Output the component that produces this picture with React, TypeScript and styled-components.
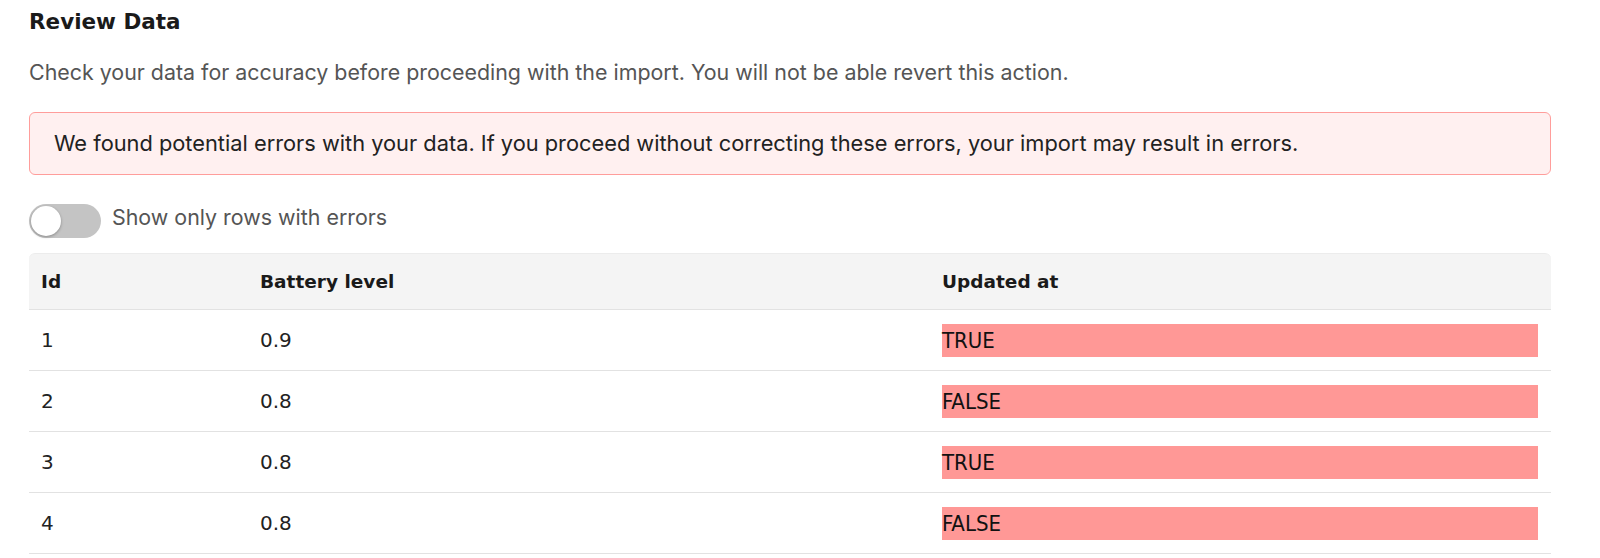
import React, { useState } from 'react';
import styled, { createGlobalStyle } from 'styled-components';

const GlobalStyle = createGlobalStyle`
  html, body {
    margin: 0;
    padding: 0;
    background: #fff;
  }
  body {
    font-family: Inter, "Noto Sans", sans-serif;
    color: #222;
  }
`;

interface Row {
  id: number;
  batteryLevel: string;
  updatedAt: string;
  error: boolean;
}

const rows: Row[] = [
  { id: 1, batteryLevel: '0.9', updatedAt: 'TRUE', error: true },
  { id: 2, batteryLevel: '0.8', updatedAt: 'FALSE', error: true },
  { id: 3, batteryLevel: '0.8', updatedAt: 'TRUE', error: true },
  { id: 4, batteryLevel: '0.8', updatedAt: 'FALSE', error: true },
];

const Page = styled.div`
  padding: 10px 49px 0 29px;
  display: flex;
  flex-direction: column;
`;

const Title = styled.h2`
  margin: 0;
  font-family: "DejaVu Sans", Lato, sans-serif;
  font-size: 21.5px;
  font-weight: 700;
  line-height: 24px;
  color: #1a1a1a;
`;

const Subtitle = styled.p`
  margin: 24px 0 0;
  font-size: 21.4px;
  line-height: 28px;
  color: #555;
`;

const Alert = styled.div`
  margin-top: 26px;
  padding: 16px 24px;
  border: 1px solid #ff9d9b;
  border-radius: 6px;
  background: #fff0f0;
  font-size: 21.8px;
  line-height: 29px;
  color: #222;
`;

const ToggleRow = styled.label`
  margin-top: 29px;
  display: flex;
  align-items: flex-start;
  gap: 11px;
  cursor: pointer;
`;

const ToggleText = styled.span`
  font-size: 21.4px;
  line-height: 26px;
  color: #555;
`;

const Track = styled.span<{ $on: boolean }>`
  position: relative;
  width: 72px;
  height: 34px;
  border-radius: 17px;
  background: ${(p) => (p.$on ? '#4c7df0' : '#c4c4c4')};
  flex-shrink: 0;
`;

const Knob = styled.span<{ $on: boolean }>`
  position: absolute;
  top: 2px;
  left: ${(p) => (p.$on ? '40px' : '2px')};
  width: 30px;
  height: 30px;
  border-radius: 50%;
  background: #fff;
  box-shadow: 0 1px 3px rgba(0, 0, 0, 0.3);
`;

const Table = styled.table`
  margin-top: 15px;
  width: 100%;
  border-collapse: separate;
  border-spacing: 0;
  table-layout: fixed;
  font-family: "DejaVu Sans", Lato, sans-serif;
`;

const HeadCell = styled.th<{ $width?: number; $first?: boolean; $last?: boolean }>`
  width: ${(p) => (p.$width ? `${p.$width}px` : 'auto')};
  height: 55px;
  padding: 0 12px;
  text-align: left;
  font-size: 18.5px;
  font-weight: 700;
  color: #1a1a1a;
  background: #f4f4f4;
  border-top: 1px solid #ececec;
  border-bottom: 1px solid #e2e2e2;
  border-top-left-radius: ${(p) => (p.$first ? '6px' : '0')};
  border-top-right-radius: ${(p) => (p.$last ? '6px' : '0')};
`;

const Cell = styled.td`
  height: 60px;
  padding: 0 13px 0 12px;
  font-size: 20px;
  color: #222;
  border-bottom: 1px solid #e2e2e2;
`;

const ErrorValue = styled.div<{ $error: boolean }>`
  height: 33px;
  display: flex;
  align-items: center;
  background: ${(p) => (p.$error ? '#ff9896' : 'transparent')};
  font-family: "DejaVu Sans Condensed", "Liberation Sans Narrow", sans-serif;
  font-stretch: condensed;
  font-size: 22px;
  color: #111;
`;

export default function App() {
  const [onlyErrors, setOnlyErrors] = useState(false);
  const visible = onlyErrors ? rows.filter((r) => r.error) : rows;

  return (
    <Page>
      <GlobalStyle />
      <Title>Review Data</Title>
      <Subtitle>
        Check your data for accuracy before proceeding with the import. You will not be able revert this action.
      </Subtitle>
      <Alert>
        We found potential errors with your data. If you proceed without correcting these errors, your import may
        result in errors.
      </Alert>
      <ToggleRow onClick={() => setOnlyErrors(!onlyErrors)}>
        <Track $on={onlyErrors}>
          <Knob $on={onlyErrors} />
        </Track>
        <ToggleText>Show only rows with errors</ToggleText>
      </ToggleRow>
      <Table>
        <thead>
          <tr>
            <HeadCell $width={195} $first>Id</HeadCell>
            <HeadCell $width={658}>Battery level</HeadCell>
            <HeadCell $last>Updated at</HeadCell>
          </tr>
        </thead>
        <tbody>
          {visible.map((row) => (
            <tr key={row.id}>
              <Cell>{row.id}</Cell>
              <Cell>{row.batteryLevel}</Cell>
              <Cell>
                <ErrorValue $error={row.error}>{row.updatedAt}</ErrorValue>
              </Cell>
            </tr>
          ))}
        </tbody>
      </Table>
    </Page>
  );
}
